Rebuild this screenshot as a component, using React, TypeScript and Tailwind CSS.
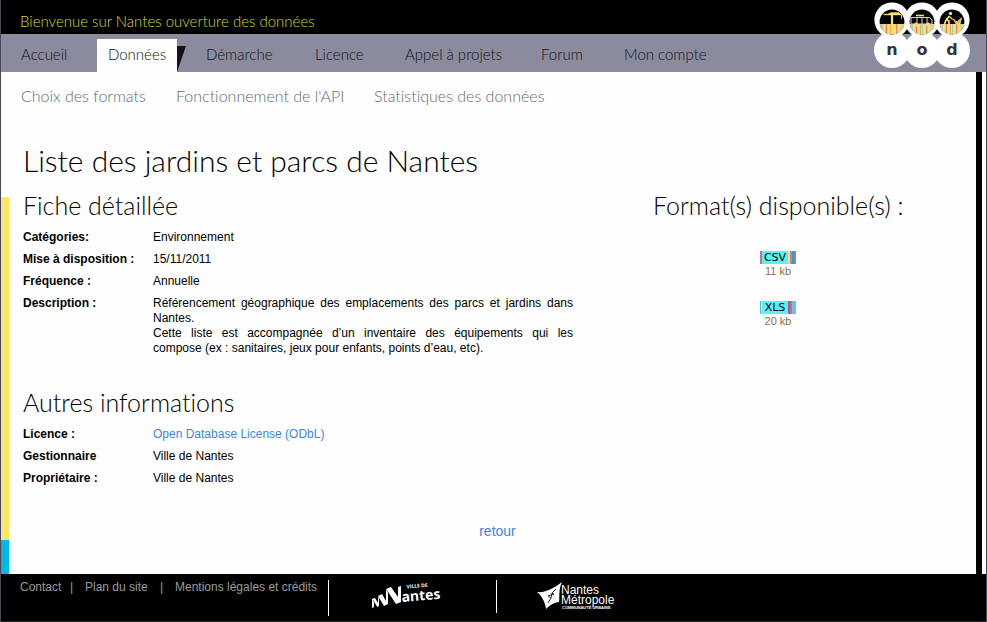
import React from "react";

const display = "font-['Lato','Open_Sans',sans-serif] [font-variant-ligatures:none]";

const navItems = ["Accueil", "Données", "Démarche", "Licence", "Appel à projets", "Forum", "Mon compte"];

const details = [
  { label: "Catégories:", value: "Environnement" },
  { label: "Mise à disposition :", value: "15/11/2011" },
  { label: "Fréquence :", value: "Annuelle" },
];

const others = [
  { label: "Gestionnaire", value: "Ville de Nantes" },
  { label: "Propriétaire :", value: "Ville de Nantes" },
];

const stripeColors = ["#f4709c", "#5fc8f0", "#fbe364", "#d8608c", "#fbe364", "#f7a04c", "#6fd8e8", "#fbe364", "#e65a8c", "#fbe364", "#7adcf0", "#f4a0b8"];

function Stripes({ cx, id }: { cx: number; id: string }) {
  return (
    <g>
      <clipPath id={id}>
        <circle cx={cx} cy="20" r="12.4" />
      </clipPath>
      <g clipPath={`url(#${id})`}>
        <rect x={cx - 13} y="7" width="26" height="26" fill="#000" />
        <rect x={cx - 13} y="22" width="26" height="11" fill="#fbe364" />
        {stripeColors.map((c, i) => (
          <rect key={i} x={cx - 12.5 + i * 2.1} y="22" width="1" height="11" fill={c} />
        ))}
      </g>
    </g>
  );
}

function NodLogo() {
  return (
    <svg width="96" height="68" viewBox="0 0 96 68" role="img" aria-label="nod">
      <g fill="#fff">
        {[18, 48, 78].map((x) => (
          <g key={x}>
            <circle cx={x} cy="18" r="17.6" />
            <circle cx={x} cy="48" r="18" />
          </g>
        ))}
      </g>
      <Stripes cx={18} id="disc-crane" />
      <Stripes cx={48} id="disc-bus" />
      <Stripes cx={78} id="disc-garden" />
      <g stroke="#fbe364" fill="none">
        <path d="M9.5 12 H14 L17 10.5 H25 L27.5 13 H10Z" fill="#fbe364" strokeWidth="0.4" />
        <path d="M18 12 V31" strokeWidth="2.2" />
        <path d="M15 24 H21" strokeWidth="1.2" />
        <path d="M27.5 13 V17" stroke="#7fd8f0" strokeWidth="1" />
      </g>
      <g stroke="#fbe364" fill="none" strokeWidth="1">
        <path d="M37 15.5 H55.5 L58 18 V22 H37Z" stroke="#d8d8c0" />
        <path d="M42 13.5 H50" strokeWidth="1.6" />
        <path d="M43 16 V22 M48 16 V22 M53 16 V22" stroke="#d8d8c0" />
        <circle cx="42" cy="22.5" r="1.6" fill="#fbe364" />
        <circle cx="54" cy="22.5" r="1.6" fill="#fbe364" />
      </g>
      <g stroke="#fbe364" fill="none" strokeWidth="1.7">
        <circle cx="76.5" cy="11.5" r="1.7" fill="#fbe364" stroke="none" />
        <path d="M75.5 14 L72.5 17.5 L75 19 V22 M72.5 17 L70.5 22" />
        <path d="M75.5 14.5 L78 17 L80.5 17.5" strokeWidth="1.2" />
        <path d="M80 18 L83 20 L87.5 16 L86 22 H82Z" fill="#f4b070" strokeWidth="0.8" />
      </g>
      <g className="font-['DejaVu_Sans',sans-serif] text-[16px] font-bold" fill="#333" textAnchor="middle">
        <text x="18" y="53">n</text>
        <text x="48" y="53">o</text>
        <text x="78" y="53">d</text>
      </g>
    </svg>
  );
}

function VilleLogo() {
  return (
    <svg width="70" height="28" viewBox="0 -3 70 28" role="img" aria-label="Ville de Nantes">
      <g fill="#fff">
        <path d="M0 22 V13 L3 12 L6 17 V10 L10 8 L14 15 V3 L19 1 L26 11 V1 L29 0 V16 L24 18 L16 6 V18 L12 20 L7 12 V20 L5 21 L2 16 V21Z" />
        <path d="M14 3 L22 17 M6 10 L11 20 M1 14 L5 21" stroke="#000" strokeWidth="0.5" />
        <g transform="rotate(-5 30 17)" className="font-['Open_Sans',sans-serif] font-bold">
          <text x="30" y="16" className="text-[14px]">antes</text>
          <text x="36" y="3" className="text-[5px]">VILLE DE</text>
        </g>
      </g>
    </svg>
  );
}

function MetropoleLogo() {
  return (
    <svg width="84" height="32" viewBox="0 0 84 32" role="img" aria-label="Nantes Métropole, communauté urbaine">
      <g fill="#fff">
        <path d="M0 10 C9 11 17 6 25 0 C21 8 23 17 22 20 C18 20 13 23 9 27 C8 20 5 14 0 10Z" />
        <path d="M19 7 L15 11 L17 12 L11 14 L14 16 L11 21 M15 11 L14 16" stroke="#000" strokeWidth="0.8" fill="none" />
        <g className="font-['Liberation_Sans',Arial,sans-serif]">
          <text x="24" y="12" className="text-[12px]">Nantes</text>
          <text x="24" y="22" className="text-[12px]">Métropole</text>
          <text x="25" y="27" className="text-[4px] font-bold">COMMUNAUTÉ URBAINE</text>
        </g>
      </g>
    </svg>
  );
}

function Heading({ children }: { children: React.ReactNode }) {
  return <h2 className={`${display} text-[25px] leading-8 font-light`}>{children}</h2>;
}

function Detail({ label, children }: { label: string; children: React.ReactNode }) {
  return (
    <div className="flex">
      <dt className="w-[130px] shrink-0 font-bold">{label}</dt>
      <dd className="w-[420px] text-justify">{children}</dd>
    </div>
  );
}

function FormatLink({ name, size, left, right }: { name: string; size: string; left: string[]; right: string[] }) {
  return (
    <a href="#" className="flex flex-col items-center text-[11px] leading-[15px] text-[#857440]">
      <span className="flex h-[13px] w-9 bg-[#5cf0f4] font-['DejaVu_Sans',sans-serif] leading-[14px] text-black">
        {left.map((c, i) => (
          <span key={i} className="w-px" style={{ backgroundColor: c }} />
        ))}
        <span className="flex-1 text-center">{name}</span>
        {right.map((c, i) => (
          <span key={i} className="w-[2px]" style={{ backgroundColor: c }} />
        ))}
      </span>
      <span>{size}</span>
    </a>
  );
}

export default function App() {
  return (
    <div className="relative flex min-h-screen flex-col border-x border-[#484856] bg-[#fefefe] font-['Liberation_Sans',Arial,sans-serif] text-xs leading-[15px] text-black">
      <header>
        <div className={`${display} h-[34px] bg-black pt-[11px] pl-[19px] text-[15px] leading-5 font-light text-[#cddc29]`}>
          Bienvenue sur Nantes ouverture des données
        </div>
        <nav className={`${display} grid h-[38px] grid-cols-[96px_99px_109px_90px_136px_83px_1fr] items-end bg-[#8b8b9e] text-[15px] font-light text-[#111]`}>
          {navItems.map((item, i) =>
            item === "Données" ? (
              <div key={item} className="flex items-end">
                <a href="#" className="h-[33px] w-20 bg-[#fefefe] text-center leading-[30px] whitespace-nowrap">{item}</a>
                <svg width="9" height="26" viewBox="0 0 9 26" aria-hidden="true">
                  <path d="M0 0H9L0 26Z" fill="#15121a" />
                </svg>
              </div>
            ) : (
              <a key={item} href="#" className={`h-[33px] leading-[30px] whitespace-nowrap ${i === 0 ? "pl-5" : "pl-[10px]"}`}>{item}</a>
            ),
          )}
        </nav>
        <a href="#" className="absolute top-[2px] right-4">
          <NodLogo />
        </a>
      </header>

      <div className="flex flex-1">
        <div className="flex w-2 shrink-0 flex-col">
          <div className="h-[125px]" />
          <div className="flex-1 bg-[#ffe762]" />
          <div className="h-[34px] bg-[#00b8e8]" />
        </div>
        <main className="flex-1 pl-[14px]">
          <nav className={`${display} -ml-[2px] grid grid-cols-[155px_198px_1fr] pt-3 text-base leading-6 font-light text-[#686878]`}>
            <a href="#" className="whitespace-nowrap">Choix des formats</a>
            <a href="#" className="whitespace-nowrap">Fonctionnement de l'API</a>
            <a href="#" className="whitespace-nowrap">Statistiques des données</a>
          </nav>
          <h1 className={`${display} mt-8 text-[30px] leading-10 font-light`}>Liste des jardins et parcs de Nantes</h1>
          <div className="mt-[9px] flex">
            <div className="w-[630px] shrink-0">
              <Heading>Fiche détaillée</Heading>
              <dl className="mt-[9px] flex flex-col gap-[7px]">
                {details.map((d) => (
                  <Detail key={d.label} label={d.label}>{d.value}</Detail>
                ))}
                <Detail label="Description :">
                  <p>Référencement géographique des emplacements des parcs et jardins dans Nantes.</p>
                  <p>Cette liste est accompagnée d’un inventaire des équipements qui les compose{"\u00a0"}(ex{"\u00a0"}: sanitaires, jeux pour enfants, points d’eau, etc).</p>
                </Detail>
              </dl>
              <div className="mt-[30px]">
                <Heading>Autres informations</Heading>
              </div>
              <dl className="mt-[9px] flex flex-col gap-[7px]">
                <Detail label="Licence :">
                  <a href="#" className="text-[#4484e0]">Open Database License (ODbL)</a>
                </Detail>
                {others.map((d) => (
                  <Detail key={d.label} label={d.label}>{d.value}</Detail>
                ))}
              </dl>
            </div>
            <section>
              <Heading>Format(s) disponible(s) :</Heading>
              <div className="mt-[30px] flex w-[250px] flex-col gap-[22px]">
                <FormatLink name="CSV" size="11 kb" left={["#c070a0", "#c070a0"]} right={["#ffe070", "#f07090", "#18a8e0", "#7090c0"]} />
                <FormatLink name="XLS" size="20 kb" left={["#60b8d8", "#e8f070"]} right={["#c05098", "#b07898", "#70c0e0", "#70c0e0"]} />
              </div>
            </section>
          </div>
          <p className="mt-[35px] pr-1 pb-[33px] text-center text-sm leading-5">
            <a href="#" className="text-[#4484e0]">retour</a>
          </p>
        </main>
        <div className="mr-1 w-[6px] shrink-0 bg-black" />
      </div>

      <footer className="flex h-12 items-start border-b border-[#28282e] bg-black pl-[19px] text-[#9a9a9a]">
        <nav className="flex w-[308px] shrink-0 pt-[6px]">
          <a href="#" className="w-[50px]">Contact</a>
          <span className="w-[15px]">|</span>
          <a href="#" className="w-[75px]">Plan du site</a>
          <span className="w-[15px]">|</span>
          <a href="#" className="whitespace-nowrap">Mentions légales et crédits</a>
        </nav>
        <a href="#" className="mt-[6px] flex h-9 w-[168px] justify-center border-l border-white pt-[3px] pr-3">
          <VilleLogo />
        </a>
        <a href="#" className="mt-[6px] flex h-[33px] border-l border-white pt-[2px] pl-10">
          <MetropoleLogo />
        </a>
      </footer>
    </div>
  );
}
